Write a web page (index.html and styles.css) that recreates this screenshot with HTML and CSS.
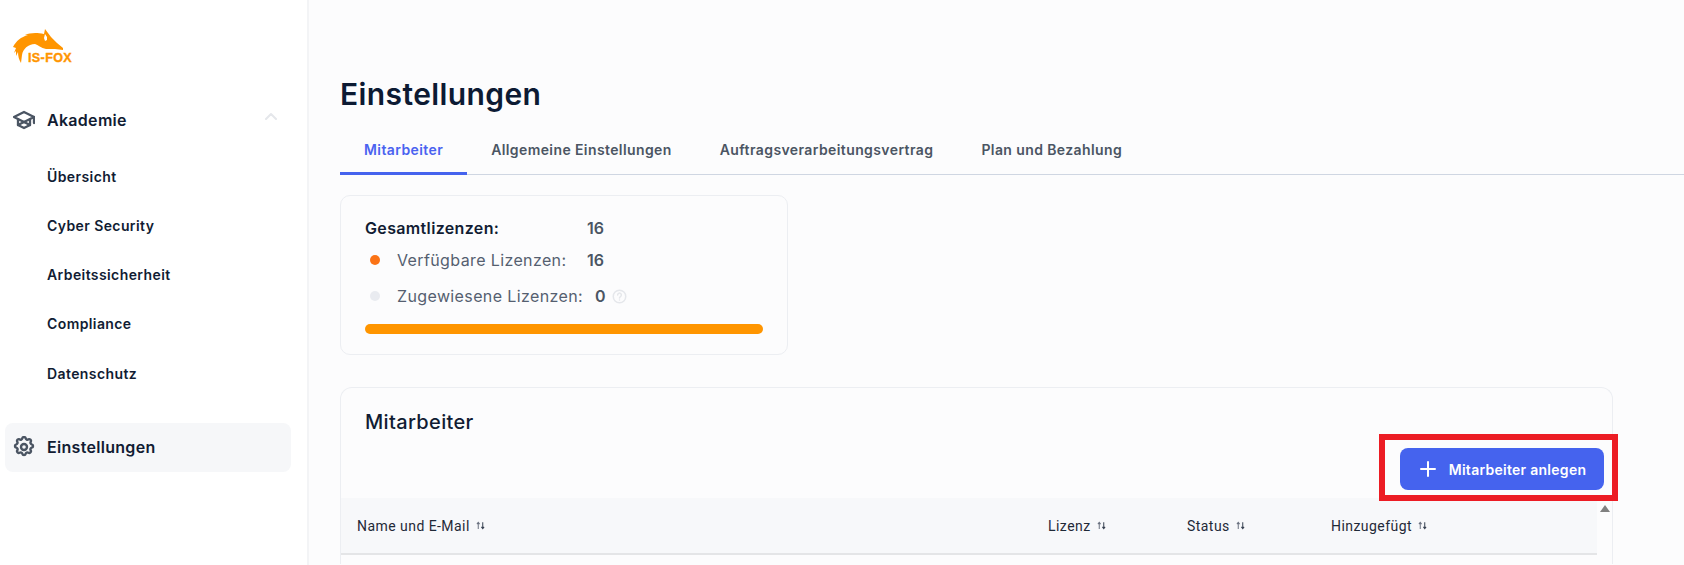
FILE: index.html
```html
<!DOCTYPE html>
<html lang="de">
<head>
<meta charset="utf-8">
<title>Einstellungen</title>
<link rel="stylesheet" href="styles.css">
</head>
<body>
<div class="app">
  <aside class="sidebar">
    <div class="logo">
      <svg class="logo-fox" width="52" height="36" viewBox="0 0 52 36">
        <path fill="#ff9500" d="M0 19C3 13 8 9 15 7l-3-.5C17 5 23 4 31 6l1-5 3 4 3 4 6 6 6 5v2l-8-1h-9c-5-1-8-4-11-5-7 0-12 5-13 11l-1 8C6 32 5 28 5 24l-2 4v-5l-2 2 2-5-3-1z"/>
        <path fill="#fff" d="M32 6l2 3v3l-2 1-1-3z"/>
      </svg>
      <span class="logo-text">IS-FOX</span>
    </div>
    <nav class="nav">
      <div class="nav-head">
        <svg class="nav-icon" viewBox="1 2 22 20" fill="none" stroke="#4b5563" stroke-width="2.3" stroke-linecap="round" stroke-linejoin="round">
          <path d="M12 4 2 9l10 5 10-5-10-5z"/>
          <path d="M6 11.5V17l6 3 6-3v-5.5"/>
          <path d="M22 9v6"/>
          <path d="M6 17l6-3 6 3"/>
        </svg>
        <span class="nav-label">Akademie</span>
        <svg class="chevron" width="14" height="8" viewBox="0 0 14 8" fill="none" stroke="#e5e7eb" stroke-width="2" stroke-linecap="round" stroke-linejoin="round"><path d="M2 7l5-5 5 5"/></svg>
      </div>
      <ul class="subnav">
        <li>Übersicht</li>
        <li>Cyber Security</li>
        <li>Arbeitssicherheit</li>
        <li>Compliance</li>
        <li>Datenschutz</li>
      </ul>
      <div class="nav-head nav-active">
        <svg class="nav-icon" viewBox="1 1 22 22" fill="none" stroke="#4b5563" stroke-width="2.4" stroke-linecap="round" stroke-linejoin="round">
          <path d="M10.3 3.3c.4-1.7 3-1.7 3.4 0a1.7 1.7 0 0 0 2.6 1.1c1.5-.9 3.3.8 2.4 2.4a1.7 1.7 0 0 0 1 2.5c1.8.4 1.8 3 0 3.4a1.7 1.7 0 0 0-1 2.6c.9 1.5-.9 3.3-2.4 2.4a1.7 1.7 0 0 0-2.6 1c-.4 1.8-3 1.8-3.4 0a1.7 1.7 0 0 0-2.6-1c-1.5.9-3.3-.9-2.4-2.4a1.7 1.7 0 0 0-1-2.6c-1.8-.4-1.8-3 0-3.4a1.7 1.7 0 0 0 1-2.5c-.9-1.6.9-3.3 2.4-2.4a1.7 1.7 0 0 0 2.6-1.1z"/>
          <circle cx="12" cy="12" r="3"/>
        </svg>
        <span class="nav-label">Einstellungen</span>
      </div>
    </nav>
  </aside>

  <main class="main">
    <h1 class="title">Einstellungen</h1>
    <div class="tabs">
      <div class="tab tab-active">Mitarbeiter</div>
      <div class="tab">Allgemeine Einstellungen</div>
      <div class="tab">Auftragsverarbeitungsvertrag</div>
      <div class="tab">Plan und Bezahlung</div>
    </div>

    <section class="license-card">
      <div class="lic-row lic-total">
        <span class="lic-total-label">Gesamtlizenzen:</span>
        <span class="lic-value">16</span>
      </div>
      <div class="lic-row lic-avail">
        <span class="dot dot-orange"></span>
        <span class="lic-label lic-label-avail">Verfügbare Lizenzen:</span>
        <span class="lic-value">16</span>
      </div>
      <div class="lic-row lic-assigned">
        <span class="dot dot-grey"></span>
        <span class="lic-label">Zugewiesene Lizenzen:</span>
        <span class="lic-value">0</span>
        <svg class="help" width="15" height="15" viewBox="0 0 24 24" fill="none" stroke="#e5e7eb" stroke-width="2.4" stroke-linecap="round"><circle cx="12" cy="12" r="10"/><path d="M9 9.5a3 3 0 1 1 4.5 2.6c-1 .6-1.5 1.2-1.5 2.4"/><path d="M12 17.5v.1"/></svg>
      </div>
      <div class="bar"></div>
    </section>

    <section class="staff-card">
      <h2 class="staff-title">Mitarbeiter</h2>
      <div class="staff-actions">
        <button class="btn">
          <svg width="16" height="16" viewBox="0 0 16 16" fill="none" stroke="#fff" stroke-width="2" stroke-linecap="round"><path d="M8 1v14M1 8h14"/></svg>
          Mitarbeiter anlegen
        </button>
        <div class="highlight"></div>
      </div>
      <div class="table-wrap">
        <div class="thead">
          <div class="th th-name">Name und E-Mail <svg class="sort" viewBox="0 0 8 8"><use href="#sort"/></svg></div>
          <div class="th th-lic">Lizenz <svg class="sort" viewBox="0 0 8 8"><use href="#sort"/></svg></div>
          <div class="th th-status">Status <svg class="sort" viewBox="0 0 8 8"><use href="#sort"/></svg></div>
          <div class="th">Hinzugefügt <svg class="sort" viewBox="0 0 8 8"><use href="#sort"/></svg></div>
        </div>
        <div class="scroll-track"><span class="scroll-up"></span></div>
      </div>
    </section>
  </main>
</div>
<svg class="defs" width="0" height="0">
  <symbol id="sort" viewBox="0 0 8 8">
    <path d="M2 7V1.5M.8 2.8 2 1.2l1.2 1.6" fill="none" stroke="#6b7280" stroke-width=".9"/>
    <path d="M6 1v5.5M4.8 5.2 6 6.8l1.2-1.6" fill="none" stroke="#374151" stroke-width=".9"/>
  </symbol>
</svg>
</body>
</html>
```
FILE: styles.css
```css
* { box-sizing: border-box; }
html, body { margin: 0; height: 100%; overflow: hidden; }
body { font-family: Inter, "Liberation Sans", sans-serif; color: #111c33; background: #fcfcfd; }
.defs { position: absolute; }
.app { display: flex; height: 565px; overflow: hidden; }

.sidebar { width: 309px; flex: none; background: #fff; border-right: 2px solid #f3f4f6; padding: 28px 0 0 5px; }
.logo { position: relative; width: 70px; height: 37px; margin-left: 8px; }
.logo-fox { display: block; }
.logo-text { position: absolute; left: 15px; top: 23px; font: 900 12.5px/14px "Liberation Sans", sans-serif; -webkit-text-stroke: .4px #ff9500; color: #ff9500; letter-spacing: .4px; }

.nav { margin-top: 30px; width: 286px; }
.nav-head { display: flex; align-items: center; height: 49px; padding-left: 8px; border-radius: 8px; }
.nav-icon { width: 22px; height: 20px; flex: none; }
.nav-active .nav-icon { width: 22px; height: 22px; }
.nav-label { margin-left: 12px; font-size: 16px; font-weight: 600; letter-spacing: .3px; color: #111c33; }
.chevron { margin-left: auto; margin-right: 13px; position: relative; top: -4px; }
.subnav { list-style: none; margin: 7.5px 0 0; padding: 0 0 0 42px; }
.subnav li { height: 49.25px; line-height: 49px; font-size: 14px; font-weight: 600; letter-spacing: .4px; color: #111c33; }
.nav-active { margin-top: 25.25px; background: #f6f7f9; padding-bottom: 2px; }

.main { flex: 1; padding: 0 0 0 31px; min-width: 0; }
.title { margin: 74px 0 0; font-size: 30px; line-height: 40px; font-weight: 600; color: #0c1a33; letter-spacing: .4px; }
.tabs { display: flex; margin-top: 19px; border-bottom: 1px solid #cfd6e2; height: 42px; }
.tab { padding: 6px 24px 0; font-size: 14px; line-height: 21px; font-weight: 600; letter-spacing: .4px; color: #4b5563; height: 42px; }
.tab-active { color: #4a62f0; border-bottom: 3px solid #4563ee; }

.license-card { width: 448px; height: 160px; margin-top: 20px; padding: 0 24px; border: 1px solid #eceef2; border-radius: 10px; display: flex; flex-direction: column; }
.lic-row { display: flex; align-items: center; font-size: 16px; }
.lic-total { margin-top: 22px; height: 20px; }
.lic-total-label { font-size: 16px; font-weight: 600; width: 222px; color: #111c33; letter-spacing: .35px; }
.lic-value { font-weight: 600; color: #4b5563; font-size: 16px; }
.lic-avail { margin-top: 12px; height: 20px; }
.lic-assigned { margin-top: 16px; height: 20px; }
.lic-label { color: #555f70; font-size: 16px; margin-right: 12px; letter-spacing: .38px; }
.lic-label-avail { width: 190px; margin-right: 0; }
.dot { width: 10px; height: 10px; border-radius: 50%; margin: 0 17px 0 5px; flex: none; }
.dot-orange { background: #fb7316; }
.dot-grey { background: #e9ebf0; }
.help { margin-left: 6px; }
.bar { height: 10px; margin-top: 18px; width: 398px; background: #ff9500; border-radius: 5px; }

.staff-card { width: 1273px; height: 177px; margin-top: 32px; border: 1px solid #eceef2; border-bottom: 0; border-radius: 12px 12px 0 0; }
.staff-title { margin: 20px 0 0 24px; font-size: 20px; line-height: 28px; font-weight: 500; color: #111c33; letter-spacing: .35px; }
.staff-actions { position: relative; display: flex; justify-content: flex-end; padding-right: 8px; margin-top: 12px; height: 50px; }
.btn { display: flex; align-items: center; justify-content: center; gap: 13px; width: 204px; height: 42px; border: 0; border-radius: 8px; background: #4563ee; color: #fff; font: 600 14px Inter, sans-serif; letter-spacing: .27px; padding: 0 0 0 2px; }
.highlight { position: absolute; right: -6px; top: -14px; width: 239px; height: 67px; border: 6px solid #ec1c24; }

.table-wrap { display: flex; }
.thead { flex: 1; display: flex; align-items: center; height: 57px; background: #f7f8fa; border-bottom: 2px solid #e4e5e7; padding-left: 16px; }
.th { font: 400 14px Roboto, sans-serif; letter-spacing: .45px; color: #1f2937; display: flex; align-items: center; gap: 6px; }
.th-name { width: 691px; }
.th-lic { width: 139px; }
.th-status { width: 144px; }
.sort { width: 9px; height: 9px; }
.scroll-track { width: 15px; position: relative; height: 57px; }
.scroll-up { position: absolute; left: 3px; top: 7px; width: 0; height: 0; border-left: 5px solid transparent; border-right: 5px solid transparent; border-bottom: 7px solid #808080; }
```
